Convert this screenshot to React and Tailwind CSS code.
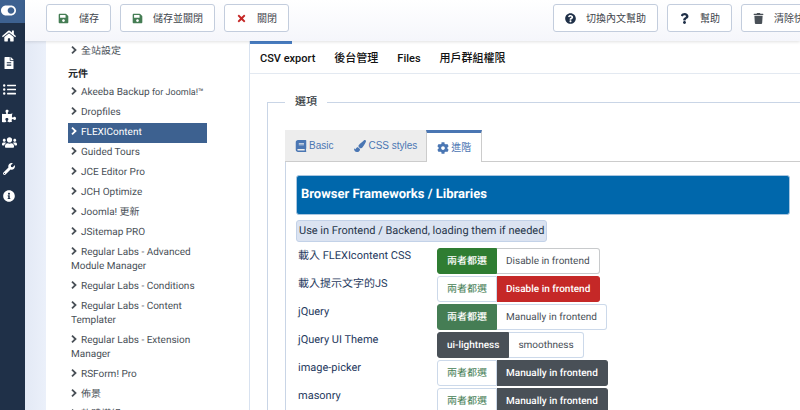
import React from 'react';
import {
  FaBook,
  FaCog,
  FaFileAlt,
  FaHome,
  FaInfoCircle,
  FaListUl,
  FaPaintBrush,
  FaPuzzlePiece,
  FaQuestion,
  FaQuestionCircle,
  FaSave,
  FaTimes,
  FaToggleOn,
  FaTrash,
  FaUsers,
  FaWrench,
} from 'react-icons/fa';

const railLinks = [
  { icon: FaHome, label: 'Home', size: 14 },
  { icon: FaFileAlt, label: 'Content', size: 12 },
  { icon: FaListUl, label: 'Menus', size: 13 },
  { icon: FaPuzzlePiece, label: 'Components', size: 14 },
  { icon: FaUsers, label: 'Users', size: 15 },
  { icon: FaWrench, label: 'System', size: 12 },
  { icon: FaInfoCircle, label: 'Help', size: 12 },
];

const components = [
  { name: 'Akeeba Backup', suffix: 'for Joomla!™' },
  { name: 'Dropfiles' },
  { name: 'FLEXIContent', active: true },
  { name: 'Guided Tours' },
  { name: 'JCE Editor Pro' },
  { name: 'JCH Optimize' },
  { name: 'Joomla! 更新' },
  { name: 'JSitemap PRO' },
  { name: 'Regular Labs - Advanced Module Manager' },
  { name: 'Regular Labs - Conditions' },
  { name: 'Regular Labs - Content Templater' },
  { name: 'Regular Labs - Extension Manager' },
  { name: 'RSForm! Pro' },
  { name: '佈景' },
  { name: '軟體模組' },
];

const green = 'has-checked:border-[#457d54] has-checked:bg-[#457d54] text-[#457d54]';
const brightGreen = 'has-checked:border-[#2f7d32] has-checked:bg-[#2f7d32] text-[#2f7d32]';
const red = 'has-checked:border-[#c52827] has-checked:bg-[#c52827] text-[#495057]';
const gray = 'has-checked:border-[#495057] has-checked:bg-[#495057] text-[#495057]';

const settings = [
  { id: 'flexi-css', label: '載入 FLEXIcontent CSS', value: 0, border: 'border-[#c8cacc]', options: [['兩者都選', brightGreen], ['Disable in frontend', red]] },
  { id: 'tooltip-js', label: '載入提示文字的JS', value: 1, border: 'border-[#ccd9ea]', options: [['兩者都選', green], ['Disable in frontend', red]] },
  { id: 'jquery', label: 'jQuery', value: 0, border: 'border-[#ccd9ea]', options: [['兩者都選', green], ['Manually in frontend', gray]] },
  { id: 'jquery-ui', label: 'jQuery UI Theme', value: 0, border: 'border-[#ccd9ea]', options: [['ui-lightness', gray], ['smoothness', gray]] },
  { id: 'image-picker', label: 'image-picker', value: 1, border: 'border-[#ccd9ea]', options: [['兩者都選', green], ['Manually in frontend', gray]] },
  { id: 'masonry', label: 'masonry', value: 1, border: 'border-[#ccd9ea]', options: [['兩者都選', green], ['Manually in frontend', gray]] },
];

const ToolbarButton = ({ icon: Icon, color, children }) => (
  <button
    type="button"
    className="flex h-7 shrink-0 items-center gap-2.5 whitespace-nowrap rounded-[3px] border border-[#c3cddd] bg-white px-[11px] text-[10px] text-[#3f464d]"
  >
    <Icon size={11} className={color} />
    {children}
  </button>
);

const Chevron = () => (
  <svg viewBox="0 0 6 8" className="mr-1 inline-block h-2 w-1.5 align-baseline" fill="none" stroke="currentColor" strokeWidth="1.8">
    <path d="M1 0.7 4.5 4 1 7.3" />
  </svg>
);

const SideLink = ({ name, suffix, active }) => (
  <a
    href="#"
    className={`block px-[3px] py-[3px] leading-[14px] ${active ? 'bg-[#3d6190] text-white' : 'text-[#495057]'}`}
  >
    <Chevron />
    {name}
    {suffix && <span className="text-[9px]"> {suffix}</span>}
  </a>
);

const Setting = ({ id, label, value, border, options }) => (
  <div className="flex h-[26px]" role="radiogroup" aria-labelledby={id}>
    <span id={id} className="w-[141px] shrink-0 pl-0.5 text-[11px] leading-4 text-[#1f3a60]">
      {label}
    </span>
    <div className="flex">
      {options.map(([text, tone], i) => (
        <label
          key={text}
          className={`relative flex items-center whitespace-nowrap border px-[9px] text-[10px] first:rounded-l-[3px] last:rounded-r-[3px] not-first:border-l-0 has-checked:font-medium has-checked:text-white ${border} ${tone}`}
        >
          <input type="radio" name={id} defaultChecked={i === value} className="sr-only" />
          {text}
        </label>
      ))}
    </div>
  </div>
);

const App = () => {
  return (
    <div className="flex h-screen overflow-hidden bg-white font-['Roboto','Noto_Sans_CJK_TC',sans-serif] text-[10px] [text-rendering:geometricPrecision]">
      <nav className="w-[25px] shrink-0 bg-[#1f3048] text-white">
        <button type="button" aria-label="Toggle menu" className="flex h-[23px] w-full items-center bg-[#3d6190] pb-0.5 pl-px">
          <FaToggleOn size={15} />
        </button>
        <div className="flex h-[186px] flex-col">
          {railLinks.map(({ icon: Icon, label, size }) => (
            <a key={label} href="#" aria-label={label} className="flex w-[18px] flex-1 items-center justify-center">
              <Icon size={size} className="shrink-0" />
            </a>
          ))}
        </div>
      </nav>

      <div className="flex min-w-0 flex-1 flex-col">
        <header className="z-10 flex h-[41px] shrink-0 items-start overflow-hidden bg-linear-to-b from-white to-[#f5f6fb] pl-[21px] pt-1 shadow-[0_1px_3px_rgba(0,0,0,0.12)]">
          <div className="flex flex-1 gap-[9px]">
            <ToolbarButton icon={FaSave} color="text-[#457d54]">儲存</ToolbarButton>
            <ToolbarButton icon={FaSave} color="text-[#457d54]">儲存並關閉</ToolbarButton>
            <ToolbarButton icon={FaTimes} color="text-[#c52827]">關閉</ToolbarButton>
          </div>
          <div className="flex w-[247px] shrink-0 gap-[9px]">
            <ToolbarButton icon={FaQuestionCircle} color="text-[#1f3048]">切換內文幫助</ToolbarButton>
            <ToolbarButton icon={FaQuestion} color="text-[#1f3048]">幫助</ToolbarButton>
            <ToolbarButton icon={FaTrash} color="text-[#495057]">清除快取</ToolbarButton>
          </div>
        </header>

        <div className="flex min-h-0 flex-1 bg-linear-to-r from-[#e3e9f5] to-[#ebf0fa] to-[21px] pl-[21px]">
          <aside className="w-[203px] shrink-0 bg-white pl-[22px] pr-[42px] pt-px">
            <SideLink name="全站設定" />
            <h2 className="pb-px pt-1.5 font-bold leading-[14px] text-[#212529]">元件</h2>
            {components.map((item) => (
              <SideLink key={item.name} {...item} />
            ))}
          </aside>

          <main className="min-w-0 flex-1 border-l border-[#d8e2f0] bg-white">
            <div className="relative flex h-[33px] border-b border-[#e3e9f1] pt-1 text-[11px] font-medium text-[#111]">
              <span className="absolute left-0 top-0 h-[3px] w-[42px] bg-[#4a7fc4]" />
              <button type="button" className="px-2.5">CSV export</button>
              <button type="button" className="pl-[9px] pr-2.5">後台管理</button>
              <button type="button" className="px-[9px]">Files</button>
              <button type="button" className="pl-2.5">用戶群組權限</button>
            </div>

            <fieldset className="ml-[17px] mt-5 min-w-0 border-l border-t border-[#c9d5e6] pl-[17px]">
              <legend className="px-2.5 text-[11px] font-medium leading-4 text-[#343a40]">選項</legend>

              <div className="mt-5 flex h-8 font-['Liberation_Sans','Noto_Sans_CJK_TC',sans-serif] text-[10px] text-[#4a76b3]">
                <button type="button" className="flex items-center gap-0.5 border-b border-[#ccc] bg-[#ededed] pl-2.5 pr-[11px]">
                  <FaBook size={12} />
                  Basic
                </button>
                <button type="button" className="flex items-center gap-0.5 border-b border-[#ccc] bg-[#ededed] pl-2.5 pr-[9px]">
                  <FaPaintBrush size={12} />
                  CSS styles
                </button>
                <button type="button" className="flex items-center gap-0.5 border-x border-t-[3px] border-x-[#ccc] border-t-[#4a76b3] px-2.5">
                  <FaCog size={12} />
                  進階
                </button>
                <div className="flex-1 border-b border-[#ccc]" />
              </div>

              <div className="border-l border-[#c9d5e6] pl-2.5 pr-2.5 pt-[13px]">
                <h3 className="rounded-[3px] border border-[#a9c6e0] bg-[#0067ab] px-1 py-[9px] text-[13px] font-bold leading-5 text-white">
                  Browser Frameworks / Libraries
                </h3>
                <p className="mt-[5px] w-fit rounded-[3px] border border-[#c3d2e8] bg-[#dbe3f1] px-0.5 text-[11px] leading-5 text-[#27364b]">
                  Use in Frontend / Backend, loading them if needed
                </p>
                <div className="mt-1.5 flex flex-col gap-0.5">
                  {settings.map((item) => (
                    <Setting key={item.id} {...item} />
                  ))}
                </div>
              </div>
            </fieldset>
          </main>
        </div>
      </div>
    </div>
  );
};

export default App;
